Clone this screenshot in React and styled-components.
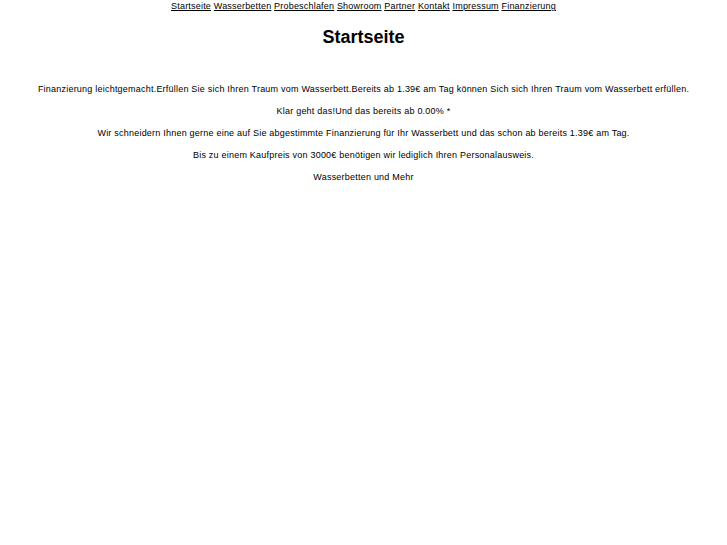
import React from "react";
import styled, { createGlobalStyle } from "styled-components";

const GlobalStyle = createGlobalStyle`
  body {
    margin: 0;
    background: #ffffff;
    color: #000000;
    font-family: "Liberation Sans", Arial, sans-serif;
  }
`;

const Page = styled.div`
  text-align: center;
  padding-top: 1px;
`;

const Nav = styled.nav`
  font-size: 9px;
  line-height: 11px;
  letter-spacing: 0.2px;
  a {
    color: #000;
    text-decoration: underline;
  }
`;

const Title = styled.h1`
  font-size: 18px;
  font-weight: bold;
  margin: 15px 0 36px;
`;

const Text = styled.p`
  font-size: 9px;
  line-height: 11px;
  letter-spacing: 0.22px;
  margin: 0 0 11px;
`;

const links = [
  "Startseite",
  "Wasserbetten",
  "Probeschlafen",
  "Showroom",
  "Partner",
  "Kontakt",
  "Impressum",
  "Finanzierung",
];

const paragraphs = [
  "Finanzierung leichtgemacht.Erfüllen Sie sich Ihren Traum vom Wasserbett.Bereits ab 1.39€ am Tag können Sich sich Ihren Traum vom Wasserbett erfüllen.",
  "Klar geht das!Und das bereits ab 0.00% *",
  "Wir schneidern Ihnen gerne eine auf Sie abgestimmte Finanzierung für Ihr Wasserbett und das schon ab bereits 1.39€ am Tag.",
  "Bis zu einem Kaufpreis von 3000€ benötigen wir lediglich Ihren Personalausweis.",
  "Wasserbetten und Mehr",
];

export default function App() {
  return (
    <>
      <GlobalStyle />
      <Page>
        <Nav>
          {links.map((l, i) => (
            <React.Fragment key={l}>
              <a href="#">{l}</a>
              {i < links.length - 1 ? " " : ""}
            </React.Fragment>
          ))}
        </Nav>
        <Title>Startseite</Title>
        {paragraphs.map((p) => (
          <Text key={p}>{p}</Text>
        ))}
      </Page>
    </>
  );
}
